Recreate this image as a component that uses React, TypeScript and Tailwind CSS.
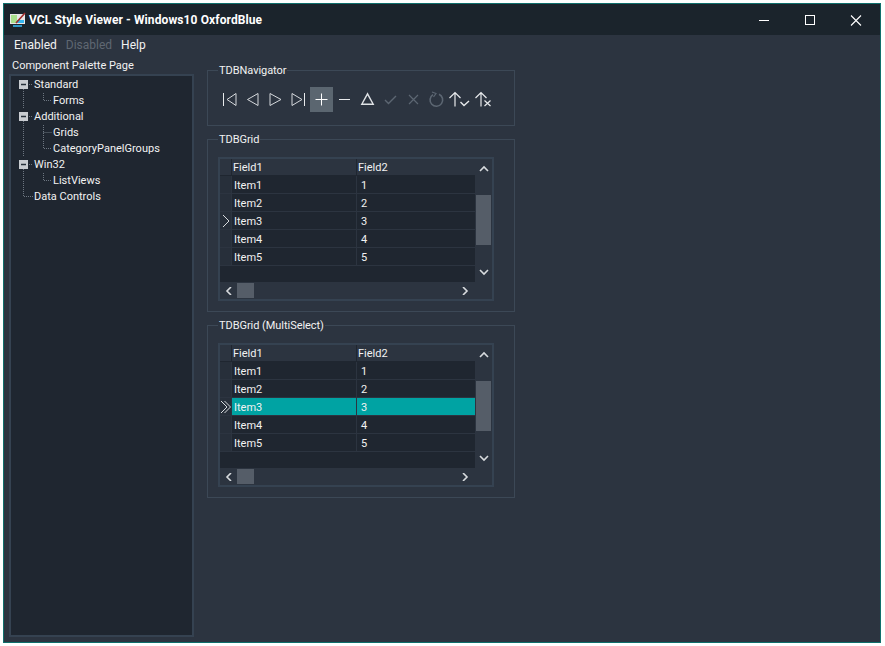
import React from "react";

const font = { fontFamily: 'Roboto, Tahoma, sans-serif' };

function NavIcon({ children, active }: { children: React.ReactNode; active?: boolean }) {
  return (
    <div className={active ? "w-[23px] h-[25px] bg-[#5b6670]" : "w-[23px] h-[25px]"}>
      <svg width="23" height="25" viewBox="0 0 23 25" fill="none">{children}</svg>
    </div>
  );
}

function Navigator() {
  const a = "#d5d8dc";
  const d = "#5c6672";
  return (
    <div className="flex">
      <NavIcon>
        <path d="M5.5 6V19" stroke="#e8eaec" />
        <path d="M18 6.5L9 12.5L18 18.5Z" stroke={a} />
      </NavIcon>
      <NavIcon>
        <path d="M17 6.5L6.5 12.5L17 18.5Z" stroke={a} />
      </NavIcon>
      <NavIcon>
        <path d="M6 6.5L17 12.5L6 18.5Z" stroke={a} />
      </NavIcon>
      <NavIcon>
        <path d="M5 6.5L15 12.5L5 18.5Z" stroke={a} />
        <path d="M17.5 6V19" stroke="#e8eaec" />
      </NavIcon>
      <NavIcon active>
        <path d="M5.5 12.5H17.5M11.5 6.5V18.5" stroke="#ffffff" />
      </NavIcon>
      <NavIcon>
        <path d="M6 12.5H17" stroke="#e8eaec" />
      </NavIcon>
      <NavIcon>
        <path d="M11.5 6.8L5.8 17.2H17.2Z" stroke="#e0e3e6" strokeWidth="1.4" />
      </NavIcon>
      <NavIcon>
        <path d="M6 13L9.5 16.5L17 9" stroke={d} strokeWidth="1.4" />
      </NavIcon>
      <NavIcon>
        <path d="M7 8L16 17M16 8L7 17" stroke={d} strokeWidth="1.2" />
      </NavIcon>
      <NavIcon>
        <path d="M14 7.2A6.3 6.3 0 1 1 8 7.6" stroke={d} strokeWidth="1.6" />
        <path d="M7 5L11 6.5L8.5 10" stroke={d} strokeWidth="1.2" />
      </NavIcon>
      <NavIcon>
        <path d="M7 19.5V5.5M1.5 11L7 5.5L12.5 11" stroke="#e8eaec" strokeWidth="1.2" />
        <path d="M12.5 15L16 18.5L21 14" stroke="#e8eaec" strokeWidth="1.4" />
      </NavIcon>
      <NavIcon>
        <path d="M10 19.5V5.5M4.5 11L10 5.5L15.5 11" stroke="#e8eaec" strokeWidth="1.2" />
        <path d="M13.5 13.5L19.5 19M19.5 13.5L13.5 19" stroke="#e8eaec" strokeWidth="1.2" />
      </NavIcon>
    </div>
  );
}

function Chevron({ dir }: { dir: "up" | "down" | "left" | "right" }) {
  const d = {
    up: "M1 6L5 2L9 6",
    down: "M1 2L5 6L9 2",
    left: "M6 0L2 4L6 8",
    right: "M2 0L6 4L2 8",
  }[dir];
  const vert = dir === "up" || dir === "down";
  return (
    <svg width={vert ? 10 : 8} height={8} viewBox={vert ? "0 0 10 8" : "0 0 8 8"} fill="none">
      <path d={d} stroke="#d8dbde" strokeWidth="1.6" />
    </svg>
  );
}

const rows = [
  ["Item1", "1"],
  ["Item2", "2"],
  ["Item3", "3"],
  ["Item4", "4"],
  ["Item5", "5"],
];

function Grid({ multi }: { multi?: boolean }) {
  return (
    <div className="w-[276px] h-[144px] border-2 border-[#354251] flex flex-col bg-[#2c3440]">
      <div className="flex h-[123px]">
        <div className="w-[255px] flex flex-col bg-[#1f2630] text-[11px] leading-[18px] text-[#f2f2f2]">
          <div className="flex h-[17px] bg-[#2c3440] border-b border-[#1f2630]">
            <div className="w-[12px] border-r border-[#1f2630]" />
            <div className="w-[125px] border-r border-[#1f2630] pl-[1px]">Field1</div>
            <div className="flex-1 pl-[1px]">Field2</div>
          </div>
          {rows.map((r, i) => {
            const sel = multi && i === 2;
            return (
              <div key={r[0]} className="flex h-[18px] bg-[#2c3440] leading-[20px]">
                <div className="w-[11px] h-[17px] mr-px bg-[#272f3a] flex items-center justify-center">
                  {i === 2 && (
                    <svg width="12" height="14" viewBox="0 0 12 14" fill="none" className="shrink-0">
                      {multi ? (
                        <path d="M1 1L7 7L1 13M4.500 1L10.500 7L4.500 13" stroke="#d8dbde" />
                      ) : (
                        <path d="M3 1L9 7L3 13" stroke="#d8dbde" />
                      )}
                    </svg>
                  )}
                </div>
                <div
                  className={
                    sel
                      ? "w-[124px] h-[17px] bg-[#00a3a3] mr-px pl-[2px]"
                      : "w-[124px] h-[17px] bg-[#1f2630] mr-px pl-[2px]"
                  }
                >
                  {r[0]}
                </div>
                <div
                  className={
                    sel
                      ? "flex-1 h-[17px] bg-[#00a3a3] pl-[4px]"
                      : "flex-1 h-[17px] bg-[#1f2630] pl-[4px]"
                  }
                >
                  {r[1]}
                </div>
              </div>
            );
          })}
        </div>
        <div className="w-[17px] pl-px flex flex-col items-start bg-[#2c3440]">
          <div className="w-[15px] h-[20px] flex items-center justify-center">
            <Chevron dir="up" />
          </div>
          <div className="h-[16px]" />
          <div className="w-[15px] h-[50px] bg-[#555d68]" />
          <div className="w-[15px] flex-1 flex items-end justify-center pb-[6px]">
            <Chevron dir="down" />
          </div>
        </div>
      </div>
      <div className="h-[17px] flex items-center pl-[5px] pr-[23px]">
        <Chevron dir="left" />
        <div className="ml-[4px] w-[17px] h-[15px] bg-[#555d68]" />
        <div className="flex-1" />
        <Chevron dir="right" />
      </div>
    </div>
  );
}

function Group({ title, className, children }: { title: string; className: string; children: React.ReactNode }) {
  return (
    <div className={"border border-[#3c4856] w-[308px] pl-[10px] " + className}>
      <div className="-mt-[9px] h-[16px] leading-[18px] text-[11px] tracking-[-0.05px] text-[#f2f2f2]">
        <span className="bg-[#2c3440] pl-px pr-px">{title}</span>
      </div>
      {children}
    </div>
  );
}

function TreeRow({ label, kind, last }: { label: string; kind: "root" | "leaf" | "rootleaf"; last?: boolean }) {
  const dots = "#6d7681";
  return (
    <div className="flex h-[16px] items-center">
      <svg width={kind === "leaf" ? 41 : 22} height="16" viewBox={kind === "leaf" ? "0 0 41 16" : "0 0 22 16"} className="shrink-0" fill="none">
        {kind === "root" && (
          <>
            <path d="M12.500 12V16" stroke={dots} strokeDasharray="1 1" />
            <path d="M18 7.500H22" stroke={dots} strokeDasharray="1 1" />
            <rect x="8" y="3" width="9" height="9" fill="#c9ccd1" />
            <path d="M10 7.500H15" stroke="#26303a" strokeWidth="1.5" />
          </>
        )}
        {kind === "rootleaf" && <path d="M12.500 0V7.500H22" stroke={dots} strokeDasharray="1 1" />}
        {kind === "leaf" && (
          <>
            <path d="M12.500 0V16" stroke={dots} strokeDasharray="1 1" />
            <path d={last ? "M32.500 0V7.500H41" : "M32.500 0V16M32.500 7.500H41"} stroke={dots} strokeDasharray="1 1" />
          </>
        )}
      </svg>
      <span className="ml-px">{label}</span>
    </div>
  );
}

export default function App() {
  return (
    <div className="w-[885px] h-[646px] bg-white pt-[3px] pl-[3px]" style={font}>
      <div className="w-[878px] h-[640px] border border-[#0f6f6c] flex flex-col bg-[#2c3440] overflow-hidden">
        <div className="h-[31px] shrink-0 bg-[#1b242c] flex items-center pl-[6px]">
          <svg width="17" height="16" viewBox="0 0 17 16" className="shrink-0">
            <rect x="0" y="2" width="15" height="10" fill="#e8e8e8" />
            <rect x="1" y="3" width="6" height="8" fill="#a8e08c" />
            <rect x="7" y="8" width="7" height="3" fill="#35b6ef" />
            <path d="M6 11L15 1" stroke="#a02c2c" strokeWidth="1.6" />
            <path d="M3 14H12" stroke="#35b6ef" strokeWidth="1.6" />
          </svg>
          <span className="ml-[2px] text-[12px] font-bold tracking-[0.1px] text-white">VCL Style Viewer - Windows10 OxfordBlue</span>
          <div className="flex-1" />
          <svg width="103" height="14" viewBox="0 0 103 14" className="mr-[18px]" fill="none">
            <path d="M0 7.500H10" stroke="#fff" />
            <rect x="46.500" y="2.500" width="9" height="9" stroke="#fff" />
            <path d="M92 2.500L102 12.500M102 2.500L92 12.500" stroke="#fff" strokeWidth="1.1" />
          </svg>
        </div>
        <div className="h-[21px] shrink-0 flex items-center pl-[10px] pb-px gap-[9px] text-[12px] text-[#f2f2f2]">
          <span>Enabled</span>
          <span className="text-[#5f6772]">Disabled</span>
          <span>Help</span>
        </div>
        <div className="flex-1 flex pl-[5px] min-h-0">
          <div className="w-[185px] shrink-0 flex flex-col">
            <div className="h-[18px] pl-[3px] leading-[20px] text-[11px] text-[#f2f2f2]">Component Palette Page</div>
            <div className="h-[563px] border-2 border-[#354251] bg-[#1f2630] text-[11px] text-[#f2f2f2] pt-px">
              <TreeRow label="Standard" kind="root" />
              <TreeRow label="Forms" kind="leaf" last />
              <TreeRow label="Additional" kind="root" />
              <TreeRow label="Grids" kind="leaf" />
              <TreeRow label="CategoryPanelGroups" kind="leaf" last />
              <TreeRow label="Win32" kind="root" />
              <TreeRow label="ListViews" kind="leaf" last />
              <TreeRow label="Data Controls" kind="rootleaf" />
            </div>
          </div>
          <div className="ml-[13px] pt-[14px] flex flex-col">
            <Group title="TDBNavigator" className="h-[56px]">
              <div className="pt-[9px]"><Navigator /></div>
            </Group>
            <Group title="TDBGrid" className="h-[173px] mt-[13px]">
              <div className="pt-[10px]"><Grid /></div>
            </Group>
            <Group title="TDBGrid (MultiSelect)" className="h-[173px] mt-[13px]">
              <div className="pt-[10px]"><Grid multi /></div>
            </Group>
          </div>
        </div>
      </div>
    </div>
  );
}
